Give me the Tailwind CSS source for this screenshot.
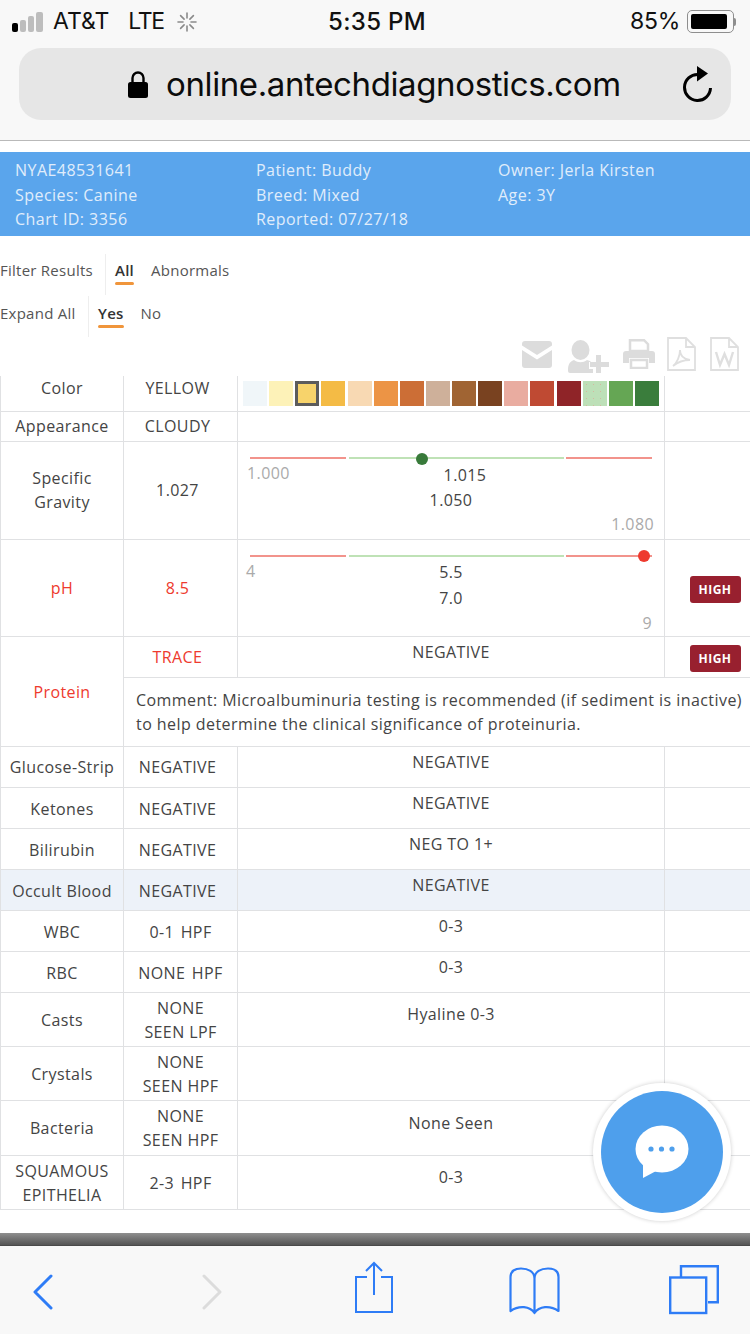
<!DOCTYPE html>
<html lang="en">
<head>
    <meta charset="UTF-8">
    <meta name="viewport" content="width=device-width, initial-scale=1.0">
    <title>Antech Diagnostics</title>
    <script src="https://cdn.jsdelivr.net/npm/@tailwindcss/browser@4"></script>
</head>
<body class="bg-white">
<div class="relative w-[750px] h-[1334px] overflow-hidden flex flex-col bg-white font-['Open_Sans',sans-serif] text-[#444]">

    <!-- safari chrome top -->
    <div class="h-[141px] shrink-0 bg-[#f8f8f8] border-b border-[#b9b9b9] font-['Inter',sans-serif] text-[#111]">
        <div class="h-[48px] pt-[10px] pl-[12px] pr-[12px] grid grid-cols-[1fr_auto_1fr] items-start">
            <div class="flex items-center h-[23px]">
                <div class="flex items-end gap-[2px] h-[20px] w-[33px]">
                    <div class="w-[6px] h-[9px] bg-black rounded-[2px]"></div>
                    <div class="w-[6px] h-[12px] bg-[#bdbdbd] rounded-[2px]"></div>
                    <div class="w-[6px] h-[16px] bg-[#bdbdbd] rounded-[2px]"></div>
                    <div class="w-[7px] h-[20px] bg-[#bdbdbd] rounded-[2px]"></div>
                </div>
                <span class="ml-[8px] text-[23px] leading-[23px] tracking-[0px]">AT&amp;T</span>
                <span class="ml-[19px] text-[23px] leading-[23px] tracking-[-1.4px]">LTE</span>
                <svg class="ml-[13px]" width="20" height="20" viewBox="0 0 20 20" stroke="#8a8a8a" stroke-width="1.6" stroke-linecap="round">
                    <path d="M10 1v5M10 14v5M1 10h5M14 10h5M3.600 3.600l3.500 3.500M12.900 12.900l3.500 3.500M3.600 16.400l3.500-3.500M12.900 7.100l3.500-3.500"/>
                </svg>
            </div>
            <div class="text-[24px] leading-[23px] font-medium tracking-[0.3px] translate-x-[2px]">5:35 PM</div>
            <div class="flex items-center justify-end h-[23px] -translate-x-[1px]">
                <span class="text-[23px] leading-[23px] tracking-[-0.3px]">85%</span>
                <div class="ml-[7px] w-[47px] h-[23px] rounded-[5px] border border-[#8e8e8e] p-[3px]">
                    <div class="w-[36px] h-full bg-black rounded-[2px]"></div>
                </div>
                <div class="w-[2px] h-[8px] mr-[1px] bg-[#8e8e8e] rounded-r-[2px]"></div>
            </div>
        </div>
        <div class="mx-[19px] h-[72px] rounded-[22px] bg-[#e6e6e6] relative flex items-center pl-[109px]">
            <svg width="20" height="27" viewBox="0 0 20 27">
                <path d="M4.500 12V7a5.500 5.500 0 0 1 11 0v5" fill="none" stroke="#000" stroke-width="2.400"/>
                <rect x="0" y="11" width="20" height="16" rx="2.500" fill="#000"/>
            </svg>
            <span class="ml-[18px] text-[33px] leading-[40px] tracking-[-0.38px] text-[#0c0c0c]">online.antechdiagnostics.com</span>
            <svg class="absolute left-[663px] top-[18px]" width="31" height="36" viewBox="0 0 31 36" fill="none">
                <path d="M16 8.500A13 13 0 1 0 28.500 22" stroke="#000" stroke-width="3"/>
                <path d="M15 0l11 7.500-11 8z" fill="#000"/>
            </svg>
        </div>
    </div>

    <div class="h-[11px] shrink-0"></div>

    <!-- patient banner -->
    <div class="h-[84px] shrink-0 bg-[#5aa5ec] pt-[6px] pl-[15px] grid grid-cols-[241px_242px_1fr] text-[16px] leading-[24.5px] tracking-[0.45px] text-[#e0edfb]">
        <div>
            <div>NYAE48531641</div>
            <div>Species: Canine</div>
            <div>Chart ID: 3356</div>
        </div>
        <div>
            <div>Patient: Buddy</div>
            <div>Breed: Mixed</div>
            <div>Reported: 07/27/18</div>
        </div>
        <div>
            <div>Owner: Jerla Kirsten</div>
            <div>Age: 3Y</div>
        </div>
    </div>

    <!-- filters -->
    <div class="h-[140px] shrink-0 pt-[18px] text-[15px] tracking-[0.25px] text-[#555]">
        <div class="h-[41px] flex">
            <div class="w-[106px] border-r border-[#eeeeee] pt-[5px] leading-[22px]">Filter Results</div>
            <div class="ml-[9px] pt-[5px] leading-[22px]">
                <div class="font-semibold text-[#333]">All</div>
                <div class="mt-[1px] h-[3px] bg-[#f0953b] rounded-full"></div>
            </div>
            <div class="ml-[17px] pt-[5px] leading-[22px]">Abnormals</div>
        </div>
        <div class="mt-[1px] h-[41px] flex">
            <div class="w-[89px] border-r border-[#eeeeee] pt-[6px] leading-[22px]">Expand All</div>
            <div class="ml-[9px] pt-[6px] leading-[22px]">
                <div class="font-semibold text-[#333]">Yes</div>
                <div class="mt-[1px] h-[3px] bg-[#f0953b] rounded-full"></div>
            </div>
            <div class="ml-[17px] pt-[6px] leading-[22px]">No</div>
        </div>
        <div class="h-[39px] flex justify-end items-start pr-[11px]">
            <svg class="mt-[4px]" width="30" height="27" viewBox="0 0 30 27" fill="#dcdcdc">
                <path d="M3 0h24a3 3 0 0 1 3 3v1.500L15 14 0 4.500V3a3 3 0 0 1 3-3z"/>
                <path d="M0 9l15 9.500L30 9v15a3 3 0 0 1-3 3H3a3 3 0 0 1-3-3z"/>
            </svg>
            <svg class="mt-[3px] ml-[16px]" width="41" height="33" viewBox="0 0 41 33" fill="#dcdcdc">
                <ellipse cx="12.500" cy="10" rx="9" ry="10"/>
                <path d="M0 31c0-6 1-9 6-11 4 3 9 3 13 0 2 .5 3 1 4 2h-2v7h4v4H2a2 2 0 0 1-2-2z"/>
                <path d="M28 15h5v7h8v5h-8v6h-5v-6h-6v-5h6z"/>
            </svg>
            <svg class="mt-[2px] ml-[14px]" width="32" height="30" viewBox="0 0 32 30" fill="#dcdcdc">
                <path d="M7 1.200h14l4 4V12H7z" fill="none" stroke="#dcdcdc" stroke-width="2.500"/>
                <path d="M3 12h26a3 3 0 0 1 3 3v9h-6v-5H6v5H0v-9a3 3 0 0 1 3-3z"/>
                <rect x="8" y="21" width="16" height="8" fill="none" stroke="#dcdcdc" stroke-width="2.500"/>
            </svg>
            <svg class="ml-[12px]" width="29" height="34" viewBox="0 0 29 34" fill="none" stroke="#dfdfdf" stroke-width="1.800">
                <path d="M1 1h18l9 9v23H1zM19 1v9h9"/>
                <path d="M6 29c4-3 7-10 7-16 0 5 3 9 10 10-5 0-11 1-17 6z"/>
            </svg>
            <svg class="ml-[14px]" width="29" height="34" viewBox="0 0 29 34" fill="none" stroke="#dfdfdf" stroke-width="1.800">
                <path d="M1 1h18l9 9v23H1zM19 1v9h9"/>
                <path d="M6 15l4 13 4.500-11 4.500 11 4-13" stroke-width="2.400"/>
            </svg>
        </div>
    </div>

    <!-- results table -->
    <div class="flex-1 min-h-0">
        <table class="table-fixed border-collapse w-[750px] text-[16px] leading-[24px] tracking-[0.4px] text-[#444] [&_td]:border [&_td]:border-[#e0e1e3] [&_td]:text-center">
            <colgroup>
                <col class="w-[123px]">
                <col class="w-[114px]">
                <col class="w-[427px]">
                <col class="w-[86px]">
            </colgroup>
            <tbody>
                <tr class="h-[35px] [&_td]:border-t-0">
                    <td class="pb-[10px]">Color</td>
                    <td class="pb-[10px] pr-[6px]">YELLOW</td>
                    <td>
                        <div class="flex gap-[2.13px] pl-[5px]">
                            <div class="w-[24px] h-[25px] bg-[#f0f6f9]"></div>
                            <div class="w-[24px] h-[25px] bg-[#fdf2b8]"></div>
                            <div class="w-[24px] h-[25px] bg-[#f7d36b] border-[3px] border-[#5c5c5c]"></div>
                            <div class="w-[24px] h-[25px] bg-[#f4bb45]"></div>
                            <div class="w-[24px] h-[25px] bg-[#f8d9b3] bg-[radial-gradient(#f6d090_0.6px,transparent_0.7px)] bg-[length:6px_6px]"></div>
                            <div class="w-[24px] h-[25px] bg-[#ec9445]"></div>
                            <div class="w-[24px] h-[25px] bg-[#cc6e36]"></div>
                            <div class="w-[24px] h-[25px] bg-[#ceb09a]"></div>
                            <div class="w-[24px] h-[25px] bg-[#a06433]"></div>
                            <div class="w-[24px] h-[25px] bg-[#794220]"></div>
                            <div class="w-[24px] h-[25px] bg-[#e9aca0] bg-[radial-gradient(#e09c90_0.6px,transparent_0.7px)] bg-[length:6px_6px]"></div>
                            <div class="w-[24px] h-[25px] bg-[#bf4a33]"></div>
                            <div class="w-[24px] h-[25px] bg-[#8f2428]"></div>
                            <div class="w-[24px] h-[25px] bg-[#bde0b8] bg-[radial-gradient(#d4b8a0_0.6px,transparent_0.7px)] bg-[length:7px_7px]"></div>
                            <div class="w-[24px] h-[25px] bg-[#65a654]"></div>
                            <div class="w-[24px] h-[25px] bg-[#3a7d3c] bg-[radial-gradient(#2f6e34_0.6px,transparent_0.7px)] bg-[length:6px_6px]"></div>
                        </div>
                    </td>
                    <td class="border-r-0"></td>
                </tr>
                <tr class="h-[30px]">
                    <td>Appearance</td>
                    <td class="pr-[6px]">CLOUDY</td>
                    <td></td>
                    <td class="border-r-0"></td>
                </tr>
                <tr class="h-[98px]">
                    <td>Specific<br>Gravity</td>
                    <td class="pr-[6px]">1.027</td>
                    <td class="align-top">
                        <div class="relative h-[97px] pt-[15px] px-[12px]">
                            <div class="flex h-[2px]">
                                <div class="w-[96px] bg-[#f2938c]"></div>
                                <div class="ml-[3px] w-[217px] bg-[#bfe2b6]"></div>
                                <div class="ml-[2px] w-[86px] bg-[#f2938c]"></div>
                            </div>
                            <div class="absolute left-[178px] top-[11px] w-[12px] h-[12px] rounded-full bg-[#387a3a]"></div>
                            <div class="relative h-[80px]">
                                <div class="absolute -left-[3px] top-[2px] text-[#aaa]">1.000</div>
                                <div class="absolute right-0 -mr-[2px] text-[#aaa] top-[53px]">1.080</div>
                                <div class="pt-[4px] pl-[28px]">1.015</div>
                                <div class="pt-[1px]">1.050</div>
                            </div>
                        </div>
                    </td>
                    <td class="border-r-0"></td>
                </tr>
                <tr class="h-[97px] text-[#ee3a2e]">
                    <td>pH</td>
                    <td class="pr-[6px]">8.5</td>
                    <td class="align-top text-[#444]">
                        <div class="relative h-[96px] pt-[15px] px-[12px]">
                            <div class="flex h-[2px]">
                                <div class="w-[96px] bg-[#f2938c]"></div>
                                <div class="ml-[3px] w-[217px] bg-[#bfe2b6]"></div>
                                <div class="ml-[2px] w-[86px] bg-[#f2938c]"></div>
                            </div>
                            <div class="absolute left-[400px] top-[10px] w-[12px] h-[12px] rounded-full bg-[#ee3a2e]"></div>
                            <div class="relative h-[79px]">
                                <div class="absolute -left-[4px] top-[2px] text-[#aaa]">4</div>
                                <div class="absolute right-0 top-[54px] text-[#aaa]">9</div>
                                <div class="pt-[3px]">5.5</div>
                                <div class="pt-[2px]">7.0</div>
                            </div>
                        </div>
                    </td>
                    <td class="border-r-0 pl-[15px] pt-[4px]">
                        <span class="inline-block w-[51px] h-[27px] bg-[#98202f] rounded-[3px] text-white text-[12px] leading-[27px] font-bold tracking-[0.5px]">HIGH</span>
                    </td>
                </tr>
                <tr class="h-[41px]">
                    <td rowspan="2" class="text-[#ee3a2e] pt-[2px]">Protein</td>
                    <td class="text-[#ee3a2e] pr-[6px]">TRACE</td>
                    <td class="align-top pt-[3px]">NEGATIVE</td>
                    <td class="border-r-0 pl-[15px] pt-[3px]">
                        <span class="inline-block w-[51px] h-[27px] bg-[#98202f] rounded-[3px] text-white text-[12px] leading-[27px] font-bold tracking-[0.5px] align-middle">HIGH</span>
                    </td>
                </tr>
                <tr class="h-[69px]">
                    <td colspan="3" class="!text-left pl-[12px] border-r-0 whitespace-nowrap tracking-[0.44px]">Comment: Microalbuminuria testing is recommended (if sediment is inactive)<br>to help determine the clinical significance of proteinuria.</td>
                </tr>
                <tr class="h-[41px]">
                    <td>Glucose-Strip</td>
                    <td class="pr-[6px]">NEGATIVE</td>
                    <td class="align-top pt-[3px]">NEGATIVE</td>
                    <td class="border-r-0"></td>
                </tr>
                <tr class="h-[41px]">
                    <td class="pt-[2px]">Ketones</td>
                    <td class="pt-[2px] pr-[6px]">NEGATIVE</td>
                    <td class="align-top pt-[3px]">NEGATIVE</td>
                    <td class="border-r-0"></td>
                </tr>
                <tr class="h-[41px]">
                    <td class="pt-[2px]">Bilirubin</td>
                    <td class="pt-[2px] pr-[6px]">NEGATIVE</td>
                    <td class="align-top pt-[3px]">NEG TO 1+</td>
                    <td class="border-r-0"></td>
                </tr>
                <tr class="h-[41px] bg-[#edf2f9]">
                    <td class="pt-[2px]">Occult Blood</td>
                    <td class="pt-[2px] pr-[6px]">NEGATIVE</td>
                    <td class="align-top pt-[3px]">NEGATIVE</td>
                    <td class="border-r-0"></td>
                </tr>
                <tr class="h-[41px]">
                    <td class="pt-[2px]">WBC</td>
                    <td class="pt-[2px] [word-spacing:2px]">0-1 HPF</td>
                    <td class="align-top pt-[3px]">0-3</td>
                    <td class="border-r-0"></td>
                </tr>
                <tr class="h-[41px]">
                    <td class="pt-[2px]">RBC</td>
                    <td class="pt-[2px] [word-spacing:2px]">NONE HPF</td>
                    <td class="align-top pt-[3px]">0-3</td>
                    <td class="border-r-0"></td>
                </tr>
                <tr class="h-[54px]">
                    <td class="pt-[2px]">Casts</td>
                    <td class="pt-[2px]">NONE<br>SEEN LPF</td>
                    <td class="align-top pt-[9px]">Hyaline 0-3</td>
                    <td class="border-r-0"></td>
                </tr>
                <tr class="h-[54px]">
                    <td class="pt-[2px]">Crystals</td>
                    <td class="pt-[2px]">NONE<br>SEEN HPF</td>
                    <td></td>
                    <td class="border-r-0"></td>
                </tr>
                <tr class="h-[55px]">
                    <td>Bacteria</td>
                    <td>NONE<br>SEEN HPF</td>
                    <td class="align-top pt-[10px]">None Seen</td>
                    <td class="border-r-0"></td>
                </tr>
                <tr class="h-[54px]">
                    <td class="pt-[2px]">SQUAMOUS<br>EPITHELIA</td>
                    <td class="pt-[2px] [word-spacing:2px]">2-3 HPF</td>
                    <td class="align-top pt-[9px]">0-3</td>
                    <td class="border-r-0"></td>
                </tr>
            </tbody>
        </table>
    </div>

    <!-- safari chrome bottom -->
    <div class="h-[12px] shrink-0 bg-gradient-to-b from-[#8f8f8f] to-[#555555]"></div>
    <div class="h-[89px] shrink-0 bg-[#f8f8f8] border-t border-[#4a4a4a] relative flex items-start pt-[15px]">
        <svg class="ml-[33px] mt-[13px]" width="20" height="36" viewBox="0 0 20 36" fill="none" stroke="#2e7cf6" stroke-width="3" stroke-linecap="round" stroke-linejoin="round">
            <path d="M18 2L2 18l16 16"/>
        </svg>
        <svg class="ml-[149px] mt-[13px]" width="20" height="36" viewBox="0 0 20 36" fill="none" stroke="#dcdcdc" stroke-width="3" stroke-linecap="round" stroke-linejoin="round">
            <path d="M2 2l16 16L2 34"/>
        </svg>
        <svg class="ml-[133px]" width="38" height="52" viewBox="0 0 38 52" fill="none" stroke="#2e7cf6" stroke-width="2">
            <path d="M12 16H1v35h36V16H26"/>
            <path d="M19 34V2M11 10l8-8 8 8"/>
        </svg>
        <svg class="ml-[116px] mt-[6px]" width="51" height="48" viewBox="0 0 51 48" fill="none" stroke="#2e7cf6" stroke-width="2.200" stroke-linejoin="round">
            <path d="M25.500 46C21 39 10 38 1.500 44V10C1.500 4 6 1.500 12 1.500c7 0 13.500 3 13.500 10 0-7 6.500-10 13.500-10 6 0 10.500 2.500 10.500 8.500v34c-8.500-6-19.500-5-24 2zM25.500 11.500V46"/>
        </svg>
        <svg class="ml-[109px] mt-[4px]" width="50" height="50" viewBox="0 0 50 50" fill="none" stroke="#2e7cf6" stroke-width="2.400">
            <path d="M12 12V1.200h36.800v36h-9.800"/>
            <rect x="1.200" y="12.500" width="36" height="35.500"/>
        </svg>
    </div>

    <!-- chat bubble, sits over the table -->
    <div class="absolute left-[593px] top-[1083px] w-[138px] h-[138px] rounded-full bg-white shadow-[0_0_4px_rgba(0,0,0,0.2)] flex items-center justify-center">
        <div class="w-[122px] h-[122px] rounded-full bg-[#4e9fec] flex items-center justify-center">
            <svg width="54" height="54" viewBox="0 0 54 54">
                <ellipse cx="27" cy="24" rx="26.500" ry="23.500" fill="#fff"/>
                <path d="M8 38v15l15-8z" fill="#fff"/>
                <circle cx="16" cy="24" r="2.600" fill="#4e9fec"/>
                <circle cx="26.500" cy="24" r="2.600" fill="#4e9fec"/>
                <circle cx="37" cy="24" r="2.600" fill="#4e9fec"/>
            </svg>
        </div>
    </div>
</div>
</body>
</html>
